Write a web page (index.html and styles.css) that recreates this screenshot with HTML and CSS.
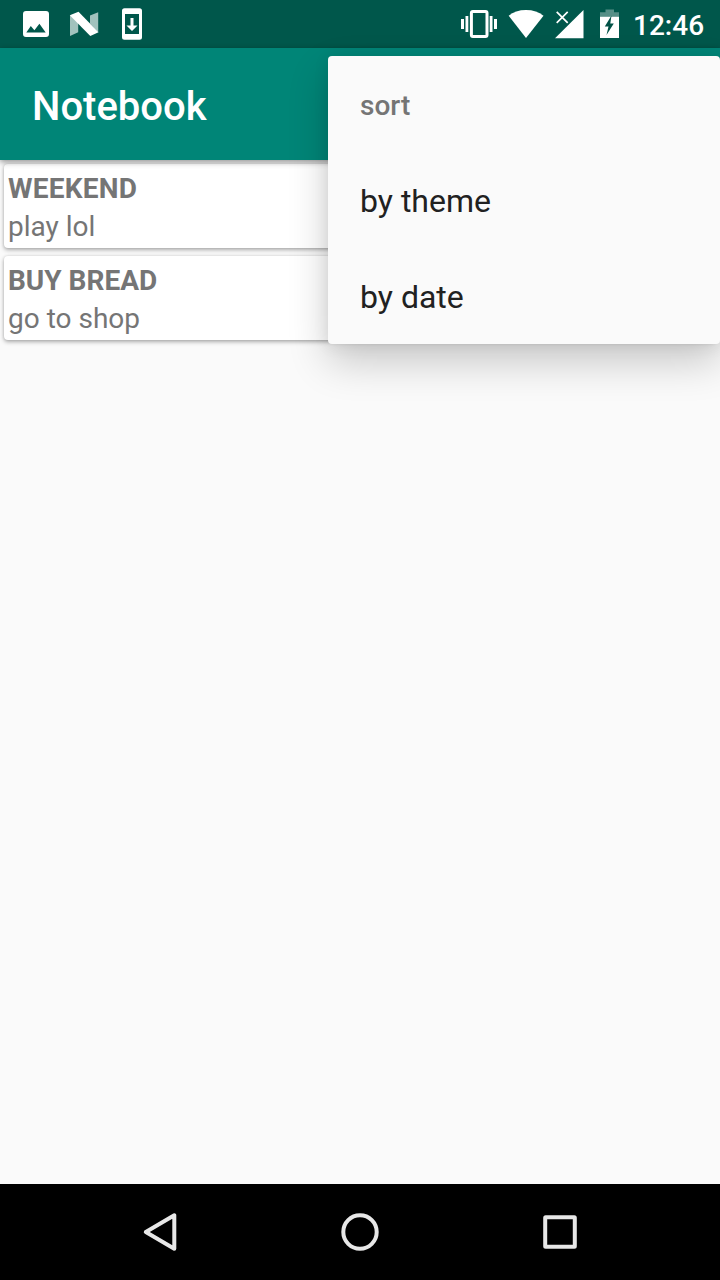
FILE: index.html
```html
<!DOCTYPE html>
<html lang="en">
<head>
<meta charset="utf-8">
<title>Notebook</title>
<link rel="stylesheet" href="styles.css">
</head>
<body>
<div class="screen">
  <header class="status-bar">
    <div class="notifications">
      <svg width="48" height="48" viewBox="12 0 48 48"><path fill="#fff" fill-rule="evenodd" d="M26 11h20a3 3 0 0 1 3 3v20a3 3 0 0 1-3 3H26a3 3 0 0 1-3-3V14a3 3 0 0 1 3-3zM26.300 32.500h19.400l-6.300-8.700-5 6.400-3.600-4.300z"/></svg>
      <svg width="48" height="48" viewBox="60 0 48 48"><path fill="#a1c2bd" d="M70 15.300v20.600l8.200-3.600V20zM98.200 12.300l-8.200 3.300v8l8.200 8.700z"/><path fill="#fff" d="M69.800 15.200L78.500 11.700L98.500 32.300L90.300 36z"/></svg>
      <svg width="48" height="48" viewBox="108 0 48 48"><path fill="#fff" fill-rule="evenodd" d="M124.500 8.300h15a2.500 2.500 0 0 1 2.500 2.500v26.500a2.500 2.500 0 0 1-2.500 2.500h-15a2.500 2.500 0 0 1-2.500-2.500V10.800a2.500 2.500 0 0 1 2.500-2.500zM125 14v20h14V14z"/><path fill="#fff" d="M130.500 18h3v7.500h4L132 31l-5.500-5.500h4z"/></svg>
    </div>
    <div class="system">
      <svg width="50" height="48" viewBox="455 0 50 48"><path fill="#fff" d="M461 19h3v10h-3zM465.500 16h2.800v16h-2.800zM489.700 16h2.800v16h-2.800zM494 19h3v10h-3z"/><rect x="471.400" y="11.500" width="15.600" height="25" rx="1.500" fill="none" stroke="#fff" stroke-width="3"/></svg>
      <svg width="45" height="48" viewBox="505 0 45 48"><path fill="#fff" d="M526 38L508.700 15.800C513 12 519 10 526 10s13 2 17.500 5.800z"/></svg>
      <svg width="45" height="48" viewBox="550 0 45 48"><path fill="#fff" d="M583.500 10v28.300H555z"/><path stroke="#fff" stroke-width="1.700" d="M556.700 11.800l11 11M567.700 11.800l-11 11"/></svg>
      <svg width="38" height="48" viewBox="595 0 38 48"><path fill="#568f87" d="M605.500 9.500h8.500v2.700h5v4.500h-19v-4.500h5.500z"/><path fill="#fff" d="M600 16.700h19V38h-19z"/><path fill="#005146" d="M611.500 15.500L604.800 26.500H608.500L606.500 35L613.800 23.500H610.300z"/></svg>
      <span class="clock">12:46</span>
    </div>
  </header>
  <div class="app-bar"><h1 class="title">Notebook</h1></div>
  <main class="notes">
    <article class="note"><h2 class="theme spaced">WEEKEND</h2><p class="text">play lol</p></article>
    <article class="note"><h2 class="theme">BUY BREAD</h2><p class="text">go to shop</p></article>
  </main>
  <nav class="nav-bar">
    <svg width="200" height="96" viewBox="60 1184 200 96"><path class="nav-shape" d="M145.800 1232L174.300 1215.300V1248.700z"/></svg>
    <svg width="200" height="96" viewBox="260 1184 200 96"><circle class="nav-shape" cx="360" cy="1232" r="16.700"/></svg>
    <svg width="200" height="96" viewBox="460 1184 200 96"><rect class="nav-shape" x="545.200" y="1217.200" width="29.600" height="29.600" rx="0.500"/></svg>
  </nav>
  <div class="menu">
    <div class="menu-heading">sort</div>
    <div class="menu-item">by theme</div>
    <div class="menu-item">by date</div>
  </div>
</div>
</body>
</html>
```
FILE: styles.css
```css
* { box-sizing: border-box; }
body { margin: 0; font-family: Roboto, sans-serif; }
svg { display: block; flex: none; }
.screen { position: relative; width: 720px; height: 1280px; display: flex; flex-direction: column; overflow: hidden; background: #fafafa; }
.status-bar { height: 48px; display: flex; justify-content: space-between; padding-left: 12px; background: #00574b; }
.notifications, .system { display: flex; }
.clock { width: 87px; font-size: 28px; font-weight: 500; line-height: 52px; color: #fff; }
.app-bar { position: relative; height: 112px; display: flex; align-items: center; padding: 6px 32px 0; background: #008577; box-shadow: 0 2px 6px rgba(0, 0, 0, .42); }
.title { margin: 0; font-size: 40px; font-weight: 500; line-height: 48px; color: #fff; }
.notes { flex: 1; display: flex; flex-direction: column; gap: 8px; padding: 4px; }
.note { height: 84px; padding: 6px 4px 0; border-radius: 4px; background: #fff; box-shadow: 0 2px 4px rgba(0, 0, 0, .3), 0 0 3px rgba(0, 0, 0, .12); }
.theme, .text { margin: 0; font-size: 28px; line-height: 38px; color: #757575; }
.theme { font-weight: 700; }
.spaced { letter-spacing: .25px; }
.text { font-weight: 400; }
.nav-bar { height: 96px; display: flex; justify-content: center; background: #000; }
.nav-shape { fill: none; stroke: #e8e8e8; stroke-width: 4; stroke-linejoin: round; }
.menu { position: absolute; top: 56px; right: 0; width: 392px; padding-left: 32px; border-radius: 4px; background: #fafafa; box-shadow: 0 18px 40px rgba(0, 0, 0, .2), 0 2px 16px rgba(0, 0, 0, .08); }
.menu-heading, .menu-item { height: 96px; line-height: 98px; }
.menu-heading { font-size: 28px; font-weight: 500; color: #757575; line-height: 100px; }
.menu-item { font-size: 32px; color: #212121; }
```
